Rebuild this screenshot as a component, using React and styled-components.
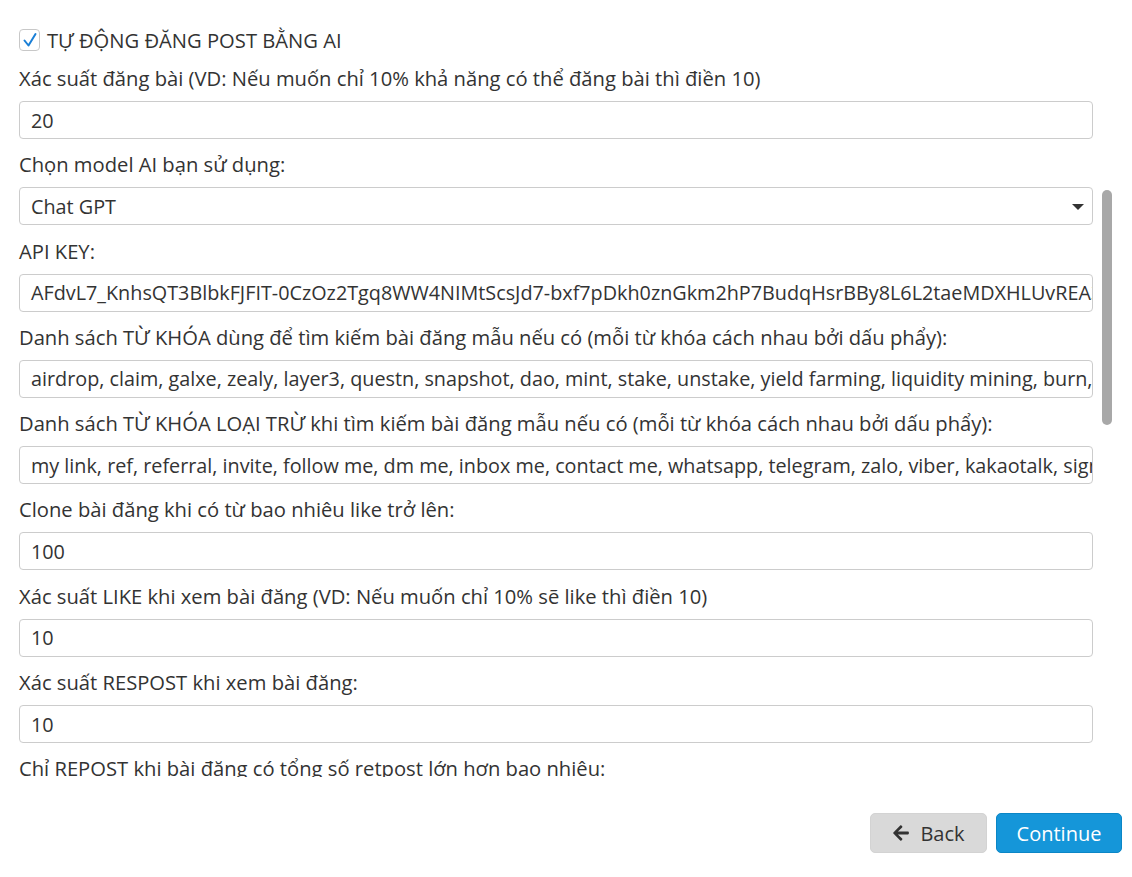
import React from 'react';
import styled, { createGlobalStyle } from 'styled-components';
import { FaArrowLeft } from 'react-icons/fa';

const GlobalStyle = createGlobalStyle`
  html, body {
    margin: 0;
    padding: 0;
    background: #ffffff;
  }
  body {
    font-family: 'Open Sans', 'Noto Sans', sans-serif;
    color: #333333;
  }
  * {
    box-sizing: border-box;
  }
`;

const fields = [
  { label: 'Xác suất đăng bài (VD: Nếu muốn chỉ 10% khả năng có thể đăng bài thì điền 10)', value: '20' },
  { label: 'Chọn model AI bạn sử dụng:', value: 'Chat GPT', select: true },
  { label: 'API KEY:', value: 'AFdvL7_KnhsQT3BlbkFJFIT-0CzOz2Tgq8WW4NIMtScsJd7-bxf7pDkh0znGkm2hP7BudqHsrBBy8L6L2taeMDXHLUvREA3x9kLq' },
  { label: 'Danh sách TỪ KHÓA dùng để tìm kiếm bài đăng mẫu nếu có (mỗi từ khóa cách nhau bởi dấu phẩy):', value: 'airdrop, claim, galxe, zealy, layer3, questn, snapshot, dao, mint, stake, unstake, yield farming, liquidity mining, burn, bridge, swap' },
  { label: 'Danh sách TỪ KHÓA LOẠI TRỪ khi tìm kiếm bài đăng mẫu nếu có (mỗi từ khóa cách nhau bởi dấu phẩy):', value: 'my link, ref, referral, invite, follow me, dm me, inbox me, contact me, whatsapp, telegram, zalo, viber, kakaotalk, signal, discord' },
  { label: 'Clone bài đăng khi có từ bao nhiêu like trở lên:', value: '100' },
  { label: 'Xác suất LIKE khi xem bài đăng (VD: Nếu muốn chỉ 10% sẽ like thì điền 10)', value: '10' },
  { label: 'Xác suất RESPOST khi xem bài đăng:', value: '10' },
  { label: 'Chỉ REPOST khi bài đăng có tổng số retpost lớn hơn bao nhiêu:', value: '5' },
];

const Page = styled.div`
  width: 1132px;
  height: 877px;
  display: flex;
  flex-direction: column;
  overflow: hidden;
`;

const ScrollArea = styled.div`
  position: relative;
  height: 777px;
  overflow: hidden;
  flex-shrink: 0;
`;

const Form = styled.div`
  width: 1093px;
  padding: 26px 0 0 19px;
  display: flex;
  flex-direction: column;
`;

const CheckRow = styled.label`
  display: flex;
  align-items: center;
  gap: 7px;
  height: 28px;
  font-size: 20.2px;
  margin-bottom: 10px;
`;

const CheckBox = styled.span`
  width: 21px;
  height: 22px;
  border: 1px solid #c8c8c8;
  border-radius: 4px;
  background: #fff;
  display: flex;
  align-items: center;
  justify-content: center;
`;

const Field = styled.div`
  display: flex;
  flex-direction: column;
  margin-bottom: 11.3px;
`;

const Label = styled.div`
  font-size: 20.2px;
  line-height: 28px;
  height: 28px;
  margin-bottom: 9px;
  white-space: nowrap;
  color: #333;
`;

const InputBox = styled.div`
  position: relative;
  height: 38px;
  border: 1px solid #cccccc;
  border-radius: 4px;
  padding: 0 0 0 11px;
  display: flex;
  align-items: center;
  font-size: 19.8px;
  color: #333;
  white-space: nowrap;
  overflow: hidden;
  background: #fff;
`;

const Caret = styled.span`
  position: absolute;
  right: 8px;
  top: 16px;
  width: 0;
  height: 0;
  border-left: 6px solid transparent;
  border-right: 6px solid transparent;
  border-top: 6px solid #333;
`;

const Thumb = styled.div`
  position: absolute;
  left: 1102px;
  top: 190px;
  width: 10px;
  height: 235px;
  border-radius: 5px;
  background: #a8a8a8;
`;

const Footer = styled.div`
  flex: 1;
  display: flex;
  justify-content: flex-end;
  align-items: flex-start;
  gap: 9px;
  padding: 36px 10px 0 0;
`;

const Button = styled.button`
  height: 40px;
  width: ${({ $w }) => $w}px;
  border-radius: 5px;
  border: 1px solid ${({ $primary }) => ($primary ? '#0b86c6' : '#d3d3d3')};
  background: ${({ $primary }) => ($primary ? '#1596d9' : '#d9d9d9')};
  color: ${({ $primary }) => ($primary ? '#ffffff' : '#333333')};
  font-family: 'Open Sans', 'Noto Sans', sans-serif;
  font-size: 20px;
  display: flex;
  align-items: center;
  justify-content: center;
  gap: 10px;
  padding: 0;
`;

export default function App() {
  return (
    <Page>
      <GlobalStyle />
      <ScrollArea>
        <Form>
          <CheckRow>
            <CheckBox>
              <svg width="16" height="16" viewBox="0 0 16 16">
                <polyline points="2.5,8.5 6.5,13.5 13.5,2" fill="none" stroke="#1a7fd6" strokeWidth="2" strokeLinecap="round" strokeLinejoin="round" />
              </svg>
            </CheckBox>
            TỰ ĐỘNG ĐĂNG POST BẰNG AI
          </CheckRow>
          {fields.map((f) => (
            <Field key={f.label}>
              <Label>{f.label}</Label>
              <InputBox>
                {f.value}
                {f.select && <Caret />}
              </InputBox>
            </Field>
          ))}
        </Form>
        <Thumb />
      </ScrollArea>
      <Footer>
        <Button $w={117}>
          <FaArrowLeft size={18} color="#333" />
          Back
        </Button>
        <Button $w={126} $primary>Continue</Button>
      </Footer>
    </Page>
  );
}
